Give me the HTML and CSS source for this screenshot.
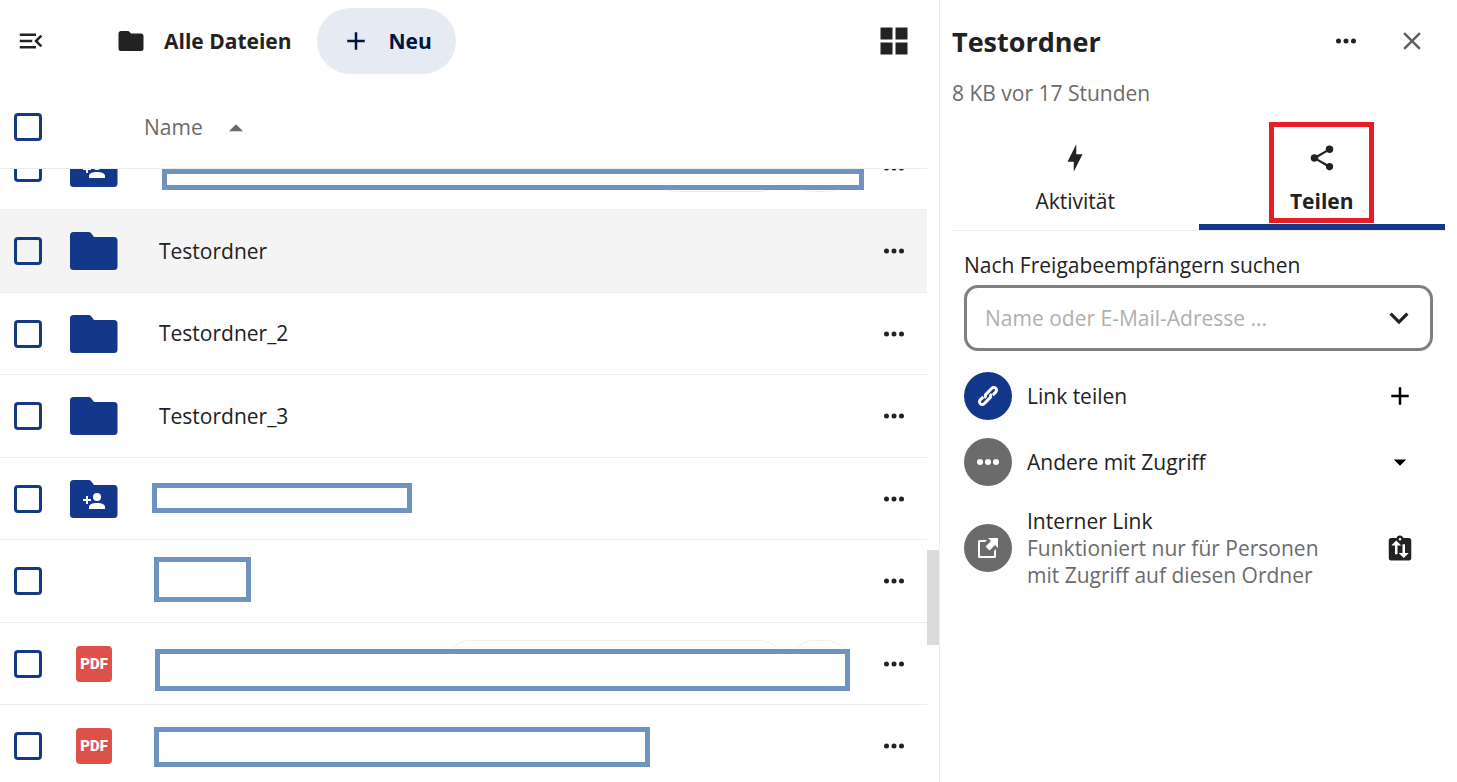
FILE: index.html
```html
<!DOCTYPE html>
<html lang="de">

<head>
  <meta charset="utf-8">
  <title>Alle Dateien</title>
  <link rel="stylesheet" href="styles.css">
</head>

<body>
  <svg class="sprite" aria-hidden="true">
    <symbol id="dots" viewBox="0 0 24 24"><path d="M16,12A2,2 0 0,1 18,10A2,2 0 0,1 20,12A2,2 0 0,1 18,14A2,2 0 0,1 16,12M10,12A2,2 0 0,1 12,10A2,2 0 0,1 14,12A2,2 0 0,1 12,14A2,2 0 0,1 10,12M4,12A2,2 0 0,1 6,10A2,2 0 0,1 8,12A2,2 0 0,1 6,14A2,2 0 0,1 4,12Z"/></symbol>
    <symbol id="plus" viewBox="0 0 24 24"><path d="M19,13H13V19H11V13H5V11H11V5H13V11H19V13Z"/></symbol>
    <symbol id="folder" viewBox="0 0 24 24"><path d="M10,4H4C2.89,4 2,4.89 2,6V18A2,2 0 0,0 4,20H20A2,2 0 0,0 22,18V8C22,6.89 21.1,6 20,6H12L10,4Z"/></symbol>
    <symbol id="folder-big" viewBox="0 0 48 38"><path d="M3.5,0H18.5Q20,0 21,1L24,5H44Q47.5,5 47.5,8.5V34.5Q47.5,38 44,38H3.5Q0,38 0,34.5V3.5Q0,0 3.5,0Z"/></symbol>
    <symbol id="person-add" viewBox="0 0 24 18"><path d="M4,4H6V7H9V9H6V12H4V9H1V7H4Z"/><circle cx="15" cy="5" r="4"/><path d="M7,17V15C7,12.3 10.5,11 15,11S23,12.3 23,15V17Z"/></symbol>
  </svg>
  <div class="app">
    <main class="files">
      <header class="toolbar">
        <button class="icon-btn" aria-label="Navigation öffnen">
          <svg class="icon" viewBox="0 0 24 24"><path d="M21,15.61L19.59,17L14.58,12L19.59,7L21,8.39L17.44,12L21,15.61M3,6H16V8H3V6M3,13V11H13V13H3M3,18V16H16V18H3Z"/></svg>
        </button>
        <a class="crumb" href="#">
          <svg class="icon"><use href="#folder"/></svg>
          Alle Dateien
        </a>
        <button class="new-btn">
          <svg class="icon"><use href="#plus"/></svg>
          Neu
        </button>
        <button class="icon-btn view-btn" aria-label="Kachelansicht">
          <svg class="icon grid-icon" viewBox="0 0 24 24"><path d="M3,11H11V3H3M3,21H11V13H3M13,21H21V13H13M13,3V11H21V3"/></svg>
        </button>
      </header>
      <div class="list-head">
        <input class="check" type="checkbox" aria-label="Alle auswählen">
        <button class="sort-btn">
          Name
          <svg class="sort-icon" viewBox="0 0 24 24"><path d="M7,15L12,10L17,15H7Z"/></svg>
        </button>
      </div>
      <div class="list">
        <table class="file-table">
          <tbody>
            <tr>
              <td class="col-check"><input class="check" type="checkbox" aria-label="Auswählen"></td>
              <td class="col-icon"><span class="shared"><svg class="folder"><use href="#folder-big"/></svg><svg class="person"><use href="#person-add"/></svg></span></td>
              <td class="col-name"><div class="tags"><span class="tag tag-medium"></span><span class="tag tag-more"></span></div><span class="mask mask-a"></span></td>
              <td class="col-more"><button class="icon-btn" aria-label="Aktionen"><svg class="icon"><use href="#dots"/></svg></button></td>
            </tr>
            <tr class="selected">
              <td class="col-check"><input class="check" type="checkbox" aria-label="Auswählen"></td>
              <td class="col-icon"><svg class="folder"><use href="#folder-big"/></svg></td>
              <td class="col-name"><a href="#">Testordner</a></td>
              <td class="col-more"><button class="icon-btn" aria-label="Aktionen"><svg class="icon"><use href="#dots"/></svg></button></td>
            </tr>
            <tr>
              <td class="col-check"><input class="check" type="checkbox" aria-label="Auswählen"></td>
              <td class="col-icon"><svg class="folder"><use href="#folder-big"/></svg></td>
              <td class="col-name"><a href="#">Testordner_2</a></td>
              <td class="col-more"><button class="icon-btn" aria-label="Aktionen"><svg class="icon"><use href="#dots"/></svg></button></td>
            </tr>
            <tr>
              <td class="col-check"><input class="check" type="checkbox" aria-label="Auswählen"></td>
              <td class="col-icon"><svg class="folder"><use href="#folder-big"/></svg></td>
              <td class="col-name"><a href="#">Testordner_3</a></td>
              <td class="col-more"><button class="icon-btn" aria-label="Aktionen"><svg class="icon"><use href="#dots"/></svg></button></td>
            </tr>
            <tr>
              <td class="col-check"><input class="check" type="checkbox" aria-label="Auswählen"></td>
              <td class="col-icon"><span class="shared"><svg class="folder"><use href="#folder-big"/></svg><svg class="person"><use href="#person-add"/></svg></span></td>
              <td class="col-name"><span class="mask mask-b"></span></td>
              <td class="col-more"><button class="icon-btn" aria-label="Aktionen"><svg class="icon"><use href="#dots"/></svg></button></td>
            </tr>
            <tr>
              <td class="col-check"><input class="check" type="checkbox" aria-label="Auswählen"></td>
              <td class="col-icon"></td>
              <td class="col-name"><span class="mask mask-c"></span></td>
              <td class="col-more"><button class="icon-btn" aria-label="Aktionen"><svg class="icon"><use href="#dots"/></svg></button></td>
            </tr>
            <tr>
              <td class="col-check"><input class="check" type="checkbox" aria-label="Auswählen"></td>
              <td class="col-icon"><span class="pdf">PDF</span></td>
              <td class="col-name"><div class="tags"><span class="tag tag-wide"></span><span class="tag tag-more"></span></div><span class="mask mask-d"></span></td>
              <td class="col-more"><button class="icon-btn" aria-label="Aktionen"><svg class="icon"><use href="#dots"/></svg></button></td>
            </tr>
            <tr>
              <td class="col-check"><input class="check" type="checkbox" aria-label="Auswählen"></td>
              <td class="col-icon"><span class="pdf">PDF</span></td>
              <td class="col-name"><span class="mask mask-e"></span></td>
              <td class="col-more"><button class="icon-btn" aria-label="Aktionen"><svg class="icon"><use href="#dots"/></svg></button></td>
            </tr>
          </tbody>
        </table>
      </div>
      <div class="scroll-thumb"></div>
    </main>

    <aside class="sidebar">
      <header class="side-head">
        <h2>Testordner</h2>
        <button class="icon-btn" aria-label="Aktionen"><svg class="icon"><use href="#dots"/></svg></button>
        <button class="icon-btn close" aria-label="Schließen">
          <svg class="icon" viewBox="0 0 24 24"><path d="M19,6.41L17.59,5L12,10.59L6.41,5L5,6.41L10.59,12L5,17.59L6.41,19L12,13.41L17.59,19L19,17.59L13.41,12L19,6.41Z"/></svg>
        </button>
      </header>
      <p class="side-info">8 KB vor 17 Stunden</p>
      <nav class="tabs">
        <button class="tab">
          <svg class="icon" viewBox="0 0 24 24"><path d="M11 15H6L13 1V9H18L11 23V15Z"/></svg>
          Aktivität
        </button>
        <button class="tab active">
          <svg class="icon" viewBox="0 0 24 24"><path d="M18,16.08C17.24,16.08 16.56,16.38 16.04,16.85L8.91,12.7C8.96,12.47 9,12.24 9,12C9,11.76 8.96,11.53 8.91,11.3L15.96,7.19C16.5,7.69 17.21,8 18,8A3,3 0 0,0 21,5A3,3 0 0,0 18,2A3,3 0 0,0 15,5C15,5.24 15.04,5.47 15.09,5.7L8.04,9.81C7.5,9.31 6.79,9 6,9A3,3 0 0,0 3,12A3,3 0 0,0 6,15C6.79,15 7.5,14.69 8.04,14.19L15.16,18.34C15.11,18.55 15.08,18.77 15.08,19C15.08,20.61 16.39,21.91 18,21.91C19.61,21.91 20.92,20.61 20.92,19A2.92,2.92 0 0,0 18,16.08Z"/></svg>
          Teilen
          <span class="highlight"></span>
        </button>
      </nav>
      <section class="sharing">
        <label for="recipient">Nach Freigabeempfängern suchen</label>
        <div class="combo">
          <input id="recipient" type="text" placeholder="Name oder E-Mail-Adresse ...">
          <button class="combo-btn" aria-label="Liste öffnen">
            <svg viewBox="0 0 24 24"><path d="M7.41,8.58L12,13.17L16.59,8.58L18,10L12,16L6,10L7.41,8.58Z"/></svg>
          </button>
        </div>
        <ul class="shares">
          <li>
            <span class="avatar primary">
              <svg class="chain" viewBox="-12 -12 24 24">
                <g transform="rotate(-45)">
                  <path d="M-4,-2.7H-8.2A2.7,2.7 0 0 0 -8.2,2.7H0A2.7,2.7 0 0 0 2.7,0"/>
                  <path d="M4,2.7H8.2A2.7,2.7 0 0 0 8.2,-2.7H0A2.7,2.7 0 0 0 -2.7,0"/>
                </g>
              </svg>
            </span>
            <span class="share-text">Link teilen</span>
            <button class="icon-btn add" aria-label="Link erstellen"><svg class="icon"><use href="#plus"/></svg></button>
          </li>
          <li>
            <span class="avatar"><svg class="avatar-dots" viewBox="0 0 24 24"><circle cx="4" cy="12" r="3"/><circle cx="12" cy="12" r="3"/><circle cx="20" cy="12" r="3"/></svg></span>
            <span class="share-text">Andere mit Zugriff</span>
            <button class="icon-btn add" aria-label="Ausklappen"><svg class="icon" viewBox="0 0 24 24"><path d="M7,10L12,15L17,10H7Z"/></svg></button>
          </li>
          <li class="internal">
            <span class="avatar"><svg class="external" viewBox="0 0 20 20"><path d="M9,2H1.5Q0,2 0,3.5V18.5Q0,20 1.5,20H16.5Q18,20 18,18.5V11L16,13V18H2V4H7ZM10,0H20V10L17,7L11.500,12.5L7.5,8.5L13,3Z"/></svg></span>
            <span class="share-text">Interner Link<small>Funktioniert nur für Personen mit Zugriff auf diesen Ordner</small></span>
            <button class="icon-btn" aria-label="Internen Link kopieren"><svg class="icon" viewBox="0 0 24 24"><path d="M19,4H14.82C14.25,2.44 12.53,1.64 11,2.2C10.14,2.5 9.5,3.16 9.18,4H5A2,2 0 0,0 3,6V20A2,2 0 0,0 5,22H19A2,2 0 0,0 21,20V6A2,2 0 0,0 19,4M12,4A1,1 0 0,1 13,5A1,1 0 0,1 12,6A1,1 0 0,1 11,5A1,1 0 0,1 12,4M10,17H8V10H5L9,6L13,10H10V17M15,20L11,16H14V9H16V16H19L15,20Z"/></svg></button>
          </li>
        </ul>
      </section>
    </aside>
  </div>
</body>

</html>
```
FILE: styles.css
```css
* {
  box-sizing: border-box;
}

body {
  margin: 0;
  font-family: 'Open Sans', 'Noto Sans', sans-serif;
  font-size: 21px;
  line-height: 27px;
  color: #222;
  background: #fff;
}

button,
input {
  font: inherit;
  color: inherit;
}

button {
  padding: 0;
  border: 0;
  background: transparent;
  cursor: pointer;
}

a {
  color: inherit;
  text-decoration: none;
}

svg {
  display: block;
  fill: currentColor;
}

.sprite {
  display: none;
}

.app {
  display: flex;
  height: 100vh;
  overflow: hidden;
}

.icon {
  width: 30px;
  height: 30px;
}

.icon-btn {
  display: flex;
  align-items: center;
  justify-content: center;
  width: 66px;
  height: 66px;
  flex: none;
}

/* file list */

.files {
  position: relative;
  flex: 1;
  min-width: 0;
  display: flex;
  flex-direction: column;
}

.toolbar {
  display: flex;
  align-items: center;
  padding: 8px 12px 8px 0;
}

.toolbar .icon-btn:first-child {
  width: 62px;
}

.crumb {
  display: flex;
  align-items: center;
  gap: 18px;
  margin-left: 54px;
  font-weight: 700;
}

.new-btn {
  display: flex;
  align-items: center;
  gap: 18px;
  height: 66px;
  margin-left: 25px;
  padding: 0 24px;
  border-radius: 33px;
  background: #e6eaf2;
  color: #00153f;
  font-weight: 700;
}

.view-btn {
  margin-left: auto;
}

.grid-icon {
  width: 36px;
  height: 36px;
}

.list-head {
  display: flex;
  align-items: center;
  height: 87px;
  margin-right: 12px;
  padding: 4px 0 0 14px;
  border-bottom: 1px solid #ededed;
  color: #6b6b6b;
}

.sort-btn {
  display: flex;
  align-items: center;
  gap: 16px;
  margin-left: 102px;
}

.sort-icon {
  width: 34px;
  height: 34px;
}

.check {
  appearance: none;
  display: block;
  width: 28px;
  height: 28px;
  margin: 0;
  border: 3px solid #153a82;
  border-radius: 4px;
}

.list {
  flex: 1;
  min-height: 0;
  margin-right: 12px;
  overflow: hidden;
}

/* scrolled halfway into the first row */
.file-table {
  width: 100%;
  margin-top: -42px;
  table-layout: fixed;
  border-collapse: separate;
  border-spacing: 0;
}

.file-table td {
  height: 82px;
  padding: 0;
  border-bottom: 1px solid #ededed;
}

.file-table tr:nth-child(even) td,
.file-table tr:first-child td {
  height: 83px;
}

.selected {
  background: #f4f4f4;
}

.col-check {
  width: 56px;
}

.file-table .col-check {
  padding-left: 14px;
}

.col-icon {
  width: 76px;
}

.col-icon > * {
  margin: 0 auto;
}

.file-table .col-name {
  position: relative;
  padding-left: 27px;
}

.col-more {
  width: 66px;
}

.folder {
  width: 48px;
  height: 38px;
  color: #13378a;
}

.shared {
  position: relative;
  display: block;
  width: 48px;
}

.person {
  position: absolute;
  left: 12px;
  top: 12px;
  width: 24px;
  height: 18px;
  color: #fff;
}

.pdf {
  display: block;
  width: 36px;
  height: 36px;
  border-radius: 4px;
  background: #dd5149;
  color: #fff;
  font-family: 'Roboto', sans-serif;
  font-size: 15px;
  font-weight: 900;
  line-height: 36px;
  text-align: center;
}

.tags {
  display: flex;
  justify-content: flex-end;
  gap: 6px;
  padding-right: 11px;
}

.tag {
  height: 48px;
  border: 1px solid #ededed;
  border-radius: 24px;
}

.tag-medium {
  width: 132px;
}

.tag-wide {
  width: 338px;
}

.tag-more {
  width: 60px;
}

/* boxes laid over names that are not shown */
.mask {
  position: absolute;
  border: 5px solid #7092be;
  background: #fff;
}

.mask-a {
  left: 30px;
  top: 42px;
  width: 702px;
  height: 21px;
}

.mask-b {
  left: 20px;
  top: 25px;
  width: 260px;
  height: 30px;
}

.mask-c {
  left: 22px;
  top: 17px;
  width: 97px;
  height: 45px;
}

.mask-d {
  left: 23px;
  top: 26px;
  width: 695px;
  height: 42px;
}

.mask-e {
  left: 22px;
  top: 22px;
  width: 496px;
  height: 40px;
}

.scroll-thumb {
  position: absolute;
  right: 0;
  top: 550px;
  width: 12px;
  height: 95px;
  background: #dbdbdb;
}

/* sidebar */

.sidebar {
  width: 518px;
  flex: none;
  padding: 8px 12px;
  border-left: 1px solid #ededed;
}

.side-head {
  display: flex;
  align-items: center;
}

.side-head h2 {
  flex: 1;
  margin: 0;
  font-size: 27px;
  font-weight: 700;
}

.close {
  color: #5f5f5f;
}

.side-info {
  margin: 6px 0 3px;
  color: #6b6b6b;
}

.tabs {
  display: flex;
  border-bottom: 1px solid #ededed;
}

.tab {
  position: relative;
  flex: 1;
  display: flex;
  flex-direction: column;
  align-items: center;
  gap: 15px;
  height: 120px;
  padding-top: 33px;
}

.tab.active {
  border-bottom: 6px solid #13378a;
  font-weight: 700;
}

.highlight {
  position: absolute;
  top: 12px;
  left: 70px;
  right: 71px;
  bottom: 1px;
  border: 5px solid #e81c24;
}

.sharing {
  padding: 21px 12px 0;
}

.sharing label {
  display: block;
}

.combo {
  display: flex;
  align-items: center;
  height: 66px;
  margin: 6px 0 12px;
  padding: 0 12px 0 18px;
  border: 3px solid #7f7f7f;
  border-radius: 14px;
}

.combo input {
  flex: 1;
  min-width: 0;
  padding: 0;
  border: 0;
  outline: 0;
  background: transparent;
}

.combo input::placeholder {
  color: #afafaf;
}

.combo-btn svg {
  width: 38px;
  height: 38px;
}

.shares {
  margin: 0;
  padding: 0;
  list-style: none;
}

.shares li {
  display: flex;
  align-items: center;
  height: 66px;
}

.shares .internal {
  height: 106px;
}

.avatar {
  display: flex;
  align-items: center;
  justify-content: center;
  flex: none;
  width: 48px;
  height: 48px;
  margin-right: 15px;
  border-radius: 50%;
  background: #6b6b6b;
  color: #fff;
}

.avatar.primary {
  background: #13378a;
}

.chain {
  width: 24px;
  height: 24px;
  fill: none;
  stroke: currentColor;
  stroke-width: 3;
}

.avatar-dots {
  width: 24px;
  height: 24px;
}

.external {
  width: 20px;
  height: 20px;
}

.share-text {
  flex: 1;
  padding: 1px 36px 0 0;
}

.share-text small {
  display: block;
  font-size: inherit;
  color: #6b6b6b;
}

.add {
  color: #000;
}
```
